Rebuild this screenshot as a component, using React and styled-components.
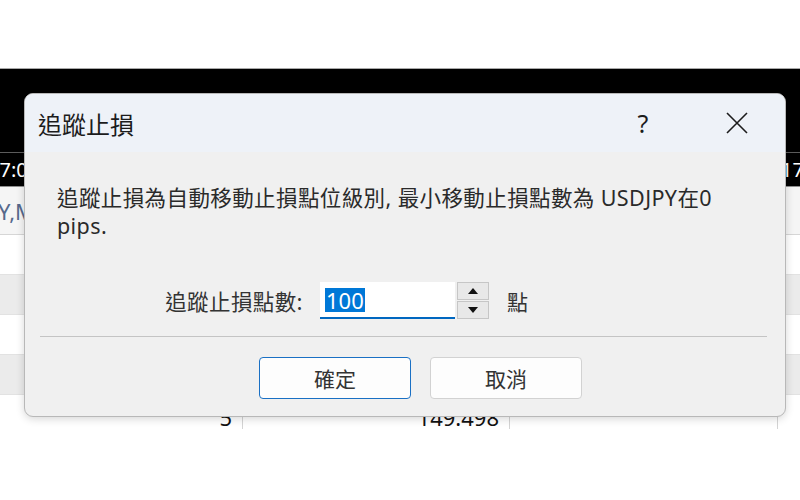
import React from 'react'
import styled, { createGlobalStyle } from 'styled-components'

const GlobalStyle = createGlobalStyle`
  html, body {
    margin: 0;
    padding: 0;
    background: #fff;
  }
  body {
    font-family: "Noto Sans", "Noto Sans CJK TC", sans-serif;
  }
`

const Screen = styled.div`
  position: relative;
  width: 800px;
  height: 500px;
  overflow: hidden;
  background: #fff;
`

const TopGap = styled.div`
  height: 68px;
  border-bottom: 1px solid #a8a8a8;
`

const DarkBand = styled.div`
  height: 117px;
  background: #000;
  display: flex;
  flex-direction: column;
  justify-content: flex-end;
`

const TimeRow = styled.div`
  height: 33px;
  border-top: 1px solid #5c5c5c;
  display: flex;
  justify-content: space-between;
  align-items: center;
  color: #fff;
  font-size: 20px;
  white-space: nowrap;
`

const Tick = styled.span`
  margin-left: ${p => p.$shift}px;
  margin-right: ${p => p.$trail || 0}px;
`

const HeaderRow = styled.div`
  height: 47px;
  border-top: 1px solid #8f8f8f;
  border-bottom: 1px solid #d6d6d6;
  background: #f5f5f5;
  display: flex;
  align-items: center;
  color: #56698c;
  font-size: 22px;
  white-space: nowrap;
`

const Stripe = styled.div`
  height: 40px;
  background: ${p => (p.$alt ? '#ebebeb' : '#fff')};
  border-bottom: 1px solid #e2e2e2;
  box-sizing: border-box;
`

const DataRow = styled.div`
  height: 34px;
  display: grid;
  grid-template-columns: 243px 267px 268px 1fr;
`

const Cell = styled.div`
  border-right: 1px solid #d4d4d4;
  display: flex;
  align-items: flex-end;
  justify-content: flex-end;
  padding-right: 10px;
  font-size: 22px;
  color: #111;
  line-height: 1;
  padding-bottom: 1px;
`

const Dialog = styled.div`
  position: absolute;
  left: 24px;
  top: 93px;
  width: 762px;
  height: 324px;
  box-sizing: border-box;
  border: 1px solid #b8b8b8;
  border-radius: 9px;
  background: #f0f0f0;
  box-shadow: 0 2px 8px rgba(0, 0, 0, 0.16);
  overflow: hidden;
  display: flex;
  flex-direction: column;
`

const TitleBar = styled.div`
  height: 58px;
  flex: none;
  background: #eef2f8;
  display: flex;
  align-items: center;
  padding-left: 13px;
`

const Title = styled.div`
  flex: 1;
  font-family: "Noto Sans CJK TC", sans-serif;
  font-size: 24px;
  color: #1c1c1c;
`

const HelpButton = styled.div`
  width: 40px;
  text-align: center;
  font-size: 25px;
  color: #1c1c1c;
  margin-right: 51px;
`

const CloseButton = styled.div`
  width: 46px;
  height: 40px;
  display: flex;
  align-items: center;
  justify-content: center;
  margin-right: 25px;
`

const Body = styled.div`
  flex: 1;
  display: flex;
  flex-direction: column;
  padding-top: 32px;
`

const Description = styled.p`
  margin: 0 0 0 32px;
  font-size: 21.5px;
  letter-spacing: 0.4px;
  line-height: 28px;
  color: #2a2a2a;
`

const FieldRow = styled.div`
  display: flex;
  align-items: center;
  margin-top: 42px;
`

const FieldLabel = styled.div`
  width: 278px;
  text-align: right;
  font-family: "Noto Sans CJK TC", sans-serif;
  font-size: 21.5px;
  letter-spacing: 0.4px;
  color: #333;
`

const Input = styled.div`
  width: 135px;
  height: 37px;
  box-sizing: border-box;
  margin-left: 17px;
  background: #fff;
  border-bottom: 2px solid #0067c0;
  display: flex;
  align-items: center;
  padding-left: 5px;
`

const Selected = styled.span`
  background: #0078d7;
  color: #fff;
  font-size: 22px;
  line-height: 24px;
  padding: 0 1px;
`

const Spinner = styled.div`
  width: 32px;
  height: 37px;
  margin-left: 2px;
  display: grid;
  grid-template-rows: 1fr 1fr;
  gap: 1px;
`

const SpinButton = styled.div`
  border: 1px solid #c6c6c6;
  background: #e8e8e8;
  display: flex;
  align-items: center;
  justify-content: center;
`

const Unit = styled.div`
  margin-left: 18px;
  font-family: "Noto Sans CJK TC", sans-serif;
  font-size: 21px;
  color: #333;
`

const Separator = styled.div`
  height: 1px;
  background: #c4c4c4;
  margin: 17px 18px 0 15px;
`

const ButtonRow = styled.div`
  display: flex;
  gap: 19px;
  margin-top: 20px;
  padding-left: 234px;
`

const Button = styled.div`
  width: 152px;
  height: 42px;
  box-sizing: border-box;
  border-radius: 4px;
  background: #fdfdfd;
  border: 1px solid ${p => (p.$primary ? '#1a70c4' : '#d2d2d2')};
  display: flex;
  align-items: center;
  justify-content: center;
  font-family: "Noto Sans CJK TC", sans-serif;
  font-size: 21px;
  color: #333;
`

const Arrow = ({ down }) => (
  <svg width="10" height="6" viewBox="0 0 10 6">
    <path d={down ? 'M0 0 L10 0 L5 6 Z' : 'M0 6 L10 6 L5 0 Z'} fill="#111" />
  </svg>
)

export default function App() {
  return (
    <Screen>
      <GlobalStyle />
      <TopGap />
      <DarkBand>
        <TimeRow>
          <Tick $shift={-12}>17:00</Tick>
          <Tick $shift={0} $trail={-4}>17</Tick>
        </TimeRow>
      </DarkBand>
      <HeaderRow>
        <Tick $shift={-2}>Y,M</Tick>
      </HeaderRow>
      <Stripe />
      <Stripe $alt />
      <Stripe />
      <Stripe $alt />
      <DataRow>
        <Cell>5</Cell>
        <Cell>149.498</Cell>
        <Cell />
        <div />
      </DataRow>

      <Dialog>
        <TitleBar>
          <Title>追蹤止損</Title>
          <HelpButton>?</HelpButton>
          <CloseButton>
            <svg width="22" height="22" viewBox="0 0 22 22">
              <path d="M1 1 L21 21 M21 1 L1 21" stroke="#1c1c1c" strokeWidth="1.6" fill="none" />
            </svg>
          </CloseButton>
        </TitleBar>
        <Body>
          <Description>
            追蹤止損為自動移動止損點位級別, 最小移動止損點數為 USDJPY在0
            <br />
            pips.
          </Description>
          <FieldRow>
            <FieldLabel>追蹤止損點數:</FieldLabel>
            <Input>
              <Selected>100</Selected>
            </Input>
            <Spinner>
              <SpinButton><Arrow /></SpinButton>
              <SpinButton><Arrow down /></SpinButton>
            </Spinner>
            <Unit>點</Unit>
          </FieldRow>
          <Separator />
          <ButtonRow>
            <Button $primary>確定</Button>
            <Button>取消</Button>
          </ButtonRow>
        </Body>
      </Dialog>
    </Screen>
  )
}
